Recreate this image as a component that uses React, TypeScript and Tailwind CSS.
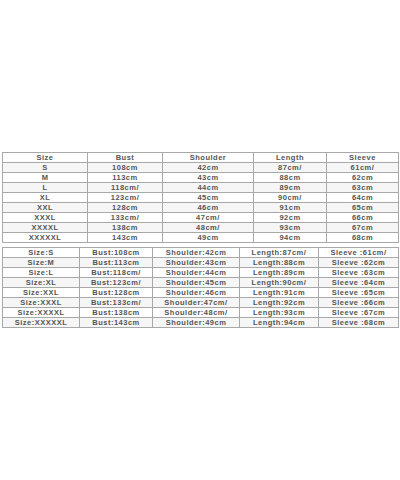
const top = {
  widths: ["w-[85px]", "w-[75px]", "w-[91px]", "w-[73px]", "w-[72px]"],
  head: ["Size", "Bust", "Shoulder", "Length", "Sleeve"],
  rows: [
    ["S", "108cm", "42cm", "87cm/", "61cm/"],
    ["M", "113cm", "43cm", "88cm", "62cm"],
    ["L", "118cm/", "44cm", "89cm", "63cm"],
    ["XL", "123cm/", "45cm", "90cm/", "64cm"],
    ["XXL", "128cm", "46cm", "91cm", "65cm"],
    ["XXXL", "133cm/", "47cm/", "92cm", "66cm"],
    ["XXXXL", "138cm", "48cm/", "93cm", "67cm"],
    ["XXXXXL", "143cm", "49cm", "94cm", "68cm"],
  ],
};

const bottom = {
  widths: ["w-[77px]", "w-[73px]", "w-[87px]", "w-[79px]", "w-[80px]"],
  rows: [
    ["Size:S", "Bust:108cm", "Shoulder:42cm", "Length:87cm/", "Sleeve :61cm/"],
    ["Size:M", "Bust:113cm", "Shoulder:43cm", "Length:88cm", "Sleeve :62cm"],
    ["Size:L", "Bust:118cm/", "Shoulder:44cm", "Length:89cm", "Sleeve :63cm"],
    ["Size:XL", "Bust:123cm/", "Shoulder:45cm", "Length:90cm/", "Sleeve :64cm"],
    ["Size:XXL", "Bust:128cm", "Shoulder:46cm", "Length:91cm", "Sleeve :65cm"],
    ["Size:XXXL", "Bust:133cm/", "Shoulder:47cm/", "Length:92cm", "Sleeve :66cm"],
    ["Size:XXXXL", "Bust:138cm", "Shoulder:48cm/", "Length:93cm", "Sleeve :67cm"],
    ["Size:XXXXXL", "Bust:143cm", "Shoulder:49cm", "Length:94cm", "Sleeve :68cm"],
  ],
};

function SizeTable({ widths, rows }: { widths: string[]; rows: string[][] }) {
  return (
    <table className="w-[396px] table-fixed border-collapse border border-[#9a9a9a]">
      <colgroup>
        {widths.map((w, i) => (
          <col key={i} className={w} />
        ))}
      </colgroup>
      <tbody>
        {rows.map((r, i) => (
          <tr key={i} className={i % 2 === 1 ? "h-[10px] bg-[#f6f6f6]" : "h-[10px] bg-white"}>
            {r.map((c, j) => (
              <td
                key={j}
                className="h-[10px] overflow-hidden whitespace-nowrap border border-[#a8a8a8] p-0 text-center align-middle text-[7.5px] font-bold leading-[8px] tracking-[0.5px] text-[#555]"
              >
                {c}
              </td>
            ))}
          </tr>
        ))}
      </tbody>
    </table>
  );
}

export default function App() {
  return (
    <div
      className="flex h-[480px] w-[400px] flex-col gap-[4px] bg-white pl-[2px] pt-[152px]"
      style={{ fontFamily: '"Liberation Sans", Arial, sans-serif' }}
    >
      <SizeTable widths={top.widths} rows={[top.head, ...top.rows]} />
      <SizeTable widths={bottom.widths} rows={bottom.rows} />
    </div>
  );
}
